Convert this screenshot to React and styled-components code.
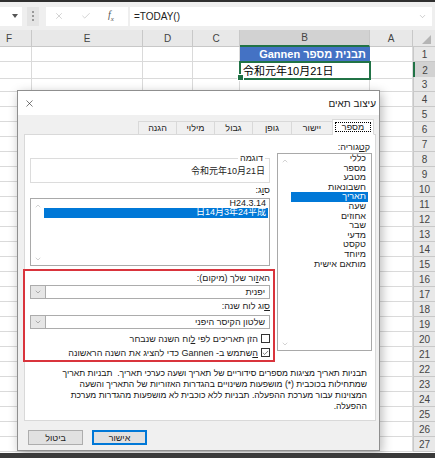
import React from "react";
import styled, { createGlobalStyle } from "styled-components";
import { X, Check, ChevronDown, ChevronUp } from "lucide-react";

const GlobalStyle = createGlobalStyle`
  html, body { margin: 0; padding: 0; background: #ffffff; }
  body { font-family: "Liberation Sans", "Noto Sans CJK JP", "DejaVu Sans", sans-serif; }
  * { box-sizing: border-box; }
`;

const Screen = styled.div`
  position: relative;
  width: 435px;
  height: 458px;
  overflow: hidden;
  background: #fff;
  border-top: 2px solid #2f2f2f;
  border-bottom: 5px solid #3a3a3a;
`;

/* ---------- formula bar ---------- */

const FormulaBar = styled.div`
  display: flex;
  align-items: center;
  height: 28px;
  padding-right: 3px;
  background: #efefef;
`;

const NameBox = styled.div`
  width: 22px;
  height: 19px;
  background: #fff;
  display: flex;
  align-items: center;
  justify-content: flex-end;
  padding-right: 4px;
`;

const Grip = styled.div`
  width: 12px;
  height: 19px;
  margin-left: 5px;
  display: flex;
  flex-direction: column;
  align-items: center;
  justify-content: center;
  gap: 2px;
  background: #e4e4e4;

  span {
    width: 2px;
    height: 2px;
    background: #9a9a9a;
  }
`;

const ActionBox = styled.div`
  width: 82px;
  height: 19px;
  margin-left: 7px;
  background: #fff;
  display: flex;
  align-items: center;
  gap: 17px;
  padding-left: 8px;
  color: #b4b4b4;
`;

const Fx = styled.span`
  width: 10px;
  font-family: "Liberation Serif", serif;
  font-style: italic;
  font-size: 10px;
  color: #555;
`;

const FormulaInput = styled.div`
  flex: 1;
  height: 19px;
  margin-left: 2px;
  background: #fff;
  display: flex;
  align-items: center;
  justify-content: space-between;
  padding: 0 5px 0 4px;
  font-size: 10px;
  color: #222;
`;

/* ---------- sheet grid ---------- */

const COLUMNS = "32px 111px 50px 47px 130px 43px 1fr";

const GridRow = styled.div`
  display: grid;
  grid-template-columns: ${COLUMNS};
  height: ${(p) => p.$h}px;
`;

const ColHead = styled.div`
  display: flex;
  align-items: center;
  justify-content: ${(p) => (p.$edge ? "flex-start" : "center")};
  padding-left: ${(p) => (p.$edge ? 6 : 0)}px;
  background: ${(p) => (p.$active ? "#d2d2d2" : "#e8e8e8")};
  border-right: 1px solid #c8c8c8;
  border-bottom: ${(p) => (p.$active ? "2px solid #217346" : "1px solid #c8c8c8")};
  font-size: 10px;
  color: #444;
`;

const Corner = styled.div`
  display: flex;
  align-items: flex-end;
  justify-content: flex-end;
  padding: 0 4px 2px 0;
  background: #e8e8e8;
  border-bottom: 1px solid #c8c8c8;
`;

const Cell = styled.div`
  position: relative;
  display: flex;
  align-items: center;
  padding: 0 3px;
  border-right: 1px solid #dadada;
  border-bottom: 1px solid #dadada;
  font-size: 11px;
  white-space: nowrap;
`;

const TitleCell = styled(Cell)`
  direction: rtl;
  background: #4472c4;
  color: #fff;
  font-weight: bold;
  border-color: #4472c4;
`;

const ActiveCell = styled(Cell)`
  z-index: 1;
  outline: 2px solid #217346;
  outline-offset: -1px;

  &::after {
    content: "";
    position: absolute;
    left: -3px;
    bottom: -3px;
    width: 5px;
    height: 5px;
    background: #217346;
    border: 1px solid #fff;
  }
`;

const RowHead = styled.div`
  display: flex;
  align-items: center;
  justify-content: center;
  background: ${(p) => (p.$active ? "#d2d2d2" : "#e8e8e8")};
  border-left: ${(p) => (p.$active ? "2px solid #217346" : "1px solid #c8c8c8")};
  border-bottom: 1px solid #c8c8c8;
  font-size: 10px;
  color: #444;
`;

/* ---------- format cells dialog ---------- */

const Dialog = styled.div`
  position: absolute;
  left: 17px;
  top: 88px;
  width: 363px;
  direction: rtl;
  text-align: right;
  background: #f0f0f0;
  border: 1px solid #8f8f8f;
  box-shadow: 2px 3px 10px rgba(0, 0, 0, 0.28);
  font-size: 9px;
  color: #222;
`;

const TitleBar = styled.div`
  display: flex;
  align-items: center;
  justify-content: space-between;
  height: 24px;
  padding: 0 3px 0 6px;
  background: #fff;
  font-size: 10px;
`;

const DialogBody = styled.div`
  padding: 6px 3px 0 6px;
`;

const TabStrip = styled.div`
  position: relative;
  z-index: 1;
  display: flex;
  align-items: flex-end;
  height: 14px;
  margin-bottom: -1px;
  padding-right: 2px;
`;

const Tab = styled.div`
  width: ${(p) => p.$w}px;
  height: ${(p) => (p.$active ? 16 : 14)}px;
  margin-left: -1px;
  padding: 2px;
  display: flex;
  background: ${(p) => (p.$active ? "#fff" : "#f0f0f0")};
  border: 1px solid #d9d9d9;
  border-bottom-color: ${(p) => (p.$active ? "#fff" : "#d9d9d9")};

  span {
    flex: 1;
    display: flex;
    align-items: center;
    justify-content: center;
    border: 1px dotted ${(p) => (p.$active ? "#000" : "transparent")};
  }
`;

const Panel = styled.div`
  display: flex;
  flex-direction: column;
  padding: 7px 3px 8px 5px;
  background: #fff;
  border: 1px solid #d9d9d9;
`;

const PanelColumns = styled.div`
  display: flex;
  gap: 7px;
`;

const Column = styled.div`
  width: ${(p) => p.$w}px;
  display: flex;
  flex-direction: column;
`;

/* labels are pinned to the right edge of their column */
const Label = styled.div`
  direction: ltr;
  display: flex;
  justify-content: flex-end;
  height: ${(p) => p.$h || 10}px;
  line-height: ${(p) => p.$h || 10}px;
  margin-top: ${(p) => p.$top || 0}px;
  padding-right: ${(p) => p.$inset || 0}px;
  white-space: nowrap;

  & > span {
    direction: rtl;
  }
`;

const Key = styled.span`
  text-decoration: underline;
`;

const ListBox = styled.div`
  display: flex;
  height: ${(p) => p.$h}px;
  margin-top: ${(p) => p.$top || 0}px;
  background: #fff;
  border: 1px solid #a9a9a9;
`;

const ListItems = styled.div`
  flex: 1;
  padding-right: ${(p) => p.$pad}px;
`;

const ListItem = styled.div`
  height: ${(p) => p.$h}px;
  line-height: ${(p) => p.$h}px;
  padding-right: 2px;
  white-space: nowrap;
  background: ${(p) => (p.$selected ? "#0078d7" : "transparent")};
  color: ${(p) => (p.$selected ? "#fff" : "#222")};
`;

const ScrollTrack = styled.div`
  width: 13px;
  display: flex;
  flex-direction: column;
  align-items: center;
  justify-content: space-between;
  padding: 3px 0 2px;
  color: #a6a6a6;
`;

const SampleGroup = styled.fieldset`
  margin: 12px 0 0;
  padding: 0 4px;
  min-inline-size: auto;
  height: 28.5px;
  border: 1px solid #dcdcdc;
`;

const SampleLegend = styled.legend`
  margin-right: 0;
  padding: 0 2px;
  font-size: 9px;
  line-height: 9px;
  color: #222;
`;

const SampleValue = styled.div`
  margin-top: 3px;
  height: 10px;
  line-height: 10px;
  font-family: "Liberation Sans", "Noto Sans CJK JP", sans-serif;
`;

const RegionFrame = styled.div`
  display: flex;
  flex-direction: column;
  margin: 3px -5px 0 -7px;
  padding: 2px 3px 0 5px;
  border: 2px solid #d9343c;
`;

const Select = styled.div`
  display: flex;
  align-items: center;
  height: 14px;
  margin-top: ${(p) => p.$top}px;
  background: #fff;
  border: 1px solid #acacac;
`;

const SelectValue = styled.div`
  flex: 1;
  padding-right: 4px;
`;

const SelectArrow = styled.div`
  width: 15px;
  align-self: stretch;
  display: flex;
  align-items: center;
  justify-content: center;
  background: #e6e6e6;
  border-right: 1px solid #acacac;
  color: #707070;
`;

const CheckRow = styled.div`
  display: flex;
  align-items: center;
  gap: 3px;
  height: 14px;
  margin-top: ${(p) => p.$top || 0}px;
  white-space: nowrap;
`;

const CheckBox = styled.span`
  width: 9px;
  height: 9px;
  display: flex;
  align-items: center;
  justify-content: center;
  background: #fff;
  border: 1px solid #333;
  color: #222;
`;

const Description = styled.div`
  margin-top: 6.5px;
  padding-right: 5px;
  font-size: 8.6px;
  line-height: 11px;
  white-space: pre;
  color: #111;
`;

const Footer = styled.div`
  display: flex;
  justify-content: flex-end;
  gap: 9px;
  padding: 9px 0 5px 4px;
`;

const Button = styled.div`
  width: 55px;
  height: 15px;
  display: flex;
  align-items: center;
  justify-content: center;
  background: #e1e1e1;
  border: ${(p) => (p.$primary ? "2px solid #0078d7" : "1px solid #adadad")};
`;

const columnHeads = ["F", "E", "D", "C", "B", "A"];

const categories = [
  "כללי",
  "מספר",
  "מטבע",
  "חשבונאות",
  "תאריך",
  "שעה",
  "אחוזים",
  "שבר",
  "מדעי",
  "טקסט",
  "מיוחד",
  "מותאם אישית",
];

const tabs = [
  { name: "מספר", w: 42, active: true },
  { name: "יישור", w: 42 },
  { name: "גופן", w: 40 },
  { name: "גבול", w: 39 },
  { name: "מילוי", w: 39 },
  { name: "הגנה", w: 39 },
];

const description = [
  "תבניות תאריך מציגות מספרים סידוריים של תאריך ושעה כערכי תאריך.  תבניות תאריך",
  "שמתחילות בכוכבית (*) מושפעות משינויים בהגדרות האזוריות של התאריך והשעה",
  "המצוינות עבור מערכת ההפעלה. תבניות ללא כוכבית לא מושפעות מהגדרות מערכת",
  "ההפעלה.",
];

function SheetRow({ n }) {
  let b = <Cell />;
  if (n === 1) b = <TitleCell>תבנית מספר Gannen</TitleCell>;
  if (n === 2) b = <ActiveCell>令和元年10月21日</ActiveCell>;
  return (
    <GridRow $h={15}>
      <Cell />
      <Cell />
      <Cell />
      <Cell />
      {b}
      <Cell />
      <RowHead $active={n === 2}>{n}</RowHead>
    </GridRow>
  );
}

function ScrollBar() {
  return (
    <ScrollTrack>
      <ChevronUp size={8} strokeWidth={1.5} />
      <ChevronDown size={8} strokeWidth={1.5} />
    </ScrollTrack>
  );
}

function FormatCellsDialog() {
  return (
    <Dialog>
      <TitleBar>
        <span>עיצוב תאים</span>
        <X size={11} strokeWidth={1.3} color="#222" />
      </TitleBar>
      <DialogBody>
        <TabStrip>
          {tabs.map((t) => (
            <Tab key={t.name} $w={t.w} $active={t.active}>
              <span>{t.name}</span>
            </Tab>
          ))}
        </TabStrip>
        <Panel>
          <PanelColumns>
            <Column $w={95}>
              <Label $inset={2}>
                <span>
                  {"ק"}
                  <Key>{"ט"}</Key>
                  {"גוריה:"}
                </span>
              </Label>
              <ListBox $h={198} $top={1}>
                <ListItems $pad={3}>
                  {categories.map((c) => (
                    <ListItem key={c} $h={9.6} $selected={c === "תאריך"}>
                      {c}
                    </ListItem>
                  ))}
                </ListItems>
                <ScrollBar />
              </ListBox>
            </Column>

            <Column $w={240}>
              <SampleGroup>
                <SampleLegend>דוגמה</SampleLegend>
                <SampleValue>令和元年10月21日</SampleValue>
              </SampleGroup>
              <Label $h={9} $top={3.5}>
                <span>
                  ס<Key>ו</Key>ג:
                </span>
              </Label>
              <ListBox $h={68} $top={2.5}>
                <ListItems $pad={1}>
                  <ListItem $h={9.5}>H24.3.14</ListItem>
                  <ListItem $h={9.5} $selected>
                    日14月3年24平成
                  </ListItem>
                </ListItems>
                <ScrollBar />
              </ListBox>

              <RegionFrame>
                <Label>
                  <span>
                    הא<Key>ז</Key>ור שלך (מיקום):
                  </span>
                </Label>
                <Select $top={2}>
                  <SelectValue>יפנית</SelectValue>
                  <SelectArrow>
                    <ChevronDown size={8} strokeWidth={1.5} />
                  </SelectArrow>
                </Select>
                <Label $top={2}>
                  <span>
                    <Key>ס</Key>וג לוח שנה:
                  </span>
                </Label>
                <Select $top={4}>
                  <SelectValue>שלטון הקיסר היפני</SelectValue>
                  <SelectArrow>
                    <ChevronDown size={8} strokeWidth={1.5} />
                  </SelectArrow>
                </Select>
                <CheckRow $top={3}>
                  <CheckBox />
                  <span>
                    הזן תאריכים לפי <Key>ל</Key>וח השנה שנבחר
                  </span>
                </CheckRow>
                <CheckRow>
                  <CheckBox>
                    <Check size={8} strokeWidth={2} />
                  </CheckBox>
                  <span>
                    <Key>ה</Key>שתמש ב- Gannen כדי להציג את השנה הראשונה
                  </span>
                </CheckRow>
              </RegionFrame>
            </Column>
          </PanelColumns>

          <Description>{description.join("\n")}</Description>
        </Panel>
        <Footer>
          <Button $primary>אישור</Button>
          <Button>ביטול</Button>
        </Footer>
      </DialogBody>
    </Dialog>
  );
}

export default function App() {
  const rows = Array.from({ length: 27 }, (_, i) => i + 1);
  return (
    <>
      <GlobalStyle />
      <Screen>
        <FormulaBar>
          <NameBox>
            <svg width="6" height="4" viewBox="0 0 6 4">
              <polygon points="0,0 6,0 3,4" fill="#555" />
            </svg>
          </NameBox>
          <Grip>
            <span />
            <span />
            <span />
          </Grip>
          <ActionBox>
            <X size={10} strokeWidth={1.4} />
            <Check size={10} strokeWidth={1.4} />
            <Fx>
              f<sub style={{ fontSize: 7 }}>x</sub>
            </Fx>
          </ActionBox>
          <FormulaInput>
            <span>=TODAY()</span>
            <ChevronDown size={9} strokeWidth={1.3} color="#999" />
          </FormulaInput>
        </FormulaBar>

        <GridRow $h={17}>
          {columnHeads.map((c, i) => (
            <ColHead key={c} $edge={i === 0} $active={c === "B"}>
              {c}
            </ColHead>
          ))}
          <Corner>
            <svg width="9" height="9" viewBox="0 0 9 9">
              <polygon points="9,0 9,9 0,9" fill="#b5b5b5" />
            </svg>
          </Corner>
        </GridRow>

        {rows.map((n) => (
          <SheetRow key={n} n={n} />
        ))}

        <FormatCellsDialog />
      </Screen>
    </>
  );
}
